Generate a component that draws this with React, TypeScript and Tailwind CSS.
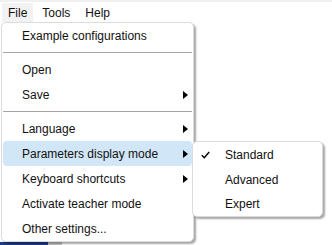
import React from 'react';

const font = "font-['Liberation_Sans','Arial',sans-serif]";

const Arrow = () => (
  <svg width="5" height="8" viewBox="0 0 5 8" className="shrink-0">
    <path d="M0 0 L5 4 L0 8 Z" fill="#000" />
  </svg>
);

const Check = () => (
  <svg width="9" height="8" viewBox="0 0 9 8">
    <path d="M0.8 4.2 L3.3 6.8 L8.2 1" stroke="#000" strokeWidth="1.4" fill="none" />
  </svg>
);

interface ItemProps {
  label: string;
  sub?: boolean;
  active?: boolean;
}

const Item: React.FC<ItemProps> = ({ label, sub, active }) => (
  <div
    className={`flex h-[25px] items-center justify-between pl-[19px] pr-[4px] mr-[1px] ml-[1px] rounded-[4px] ${
      active ? 'bg-[#d1e6f6]' : ''
    }`}
  >
    <span className="leading-none">{label}</span>
    {sub && <Arrow />}
  </div>
);

const Sep = () => (
  <div className="flex h-[9px] items-center px-[1px]">
    <div className="h-px w-full bg-[#a5a5a5]" />
  </div>
);

export default function App() {
  return (
    <div className={`relative flex h-[245px] w-[332px] flex-col overflow-hidden bg-white text-[12px] text-[#111] ${font}`}>
      <div className="h-[2px] bg-[#f0f0f0]" />
      <nav className="flex h-[20px] items-stretch gap-[3px] pl-[2px] pt-[1px]">
        <div className="flex items-center bg-[#f2f2f2] px-[6px]">File</div>
        <div className="flex items-center px-[6px]">Tools</div>
        <div className="flex items-center px-[6px]">Help</div>
      </nav>
      <main className="flex-1" />
      <div className="flex h-[3px]">
        <div className="w-[48px] bg-[#1c3d86]" />
        <div className="w-[14px] bg-[#c9c9c9]" />
      </div>

      {/* File menu */}
      <div className="absolute left-[1px] top-[22px] w-[193px] rounded-[5px] border border-[#dcdcdc] bg-white shadow-[2px_2px_2px_rgba(0,0,0,0.35)]">
        <Item label="Example configurations" />
        <Sep />
        <Item label="Open" />
        <Item label="Save" sub />
        <Sep />
        <Item label="Language" sub />
        <Item label="Parameters display mode" sub active />
        <Item label="Keyboard shortcuts" sub />
        <Item label="Activate teacher mode" />
        <Item label="Other settings..." />
      </div>

      {/* Parameters display mode submenu */}
      <div className="absolute left-[192px] top-[141px] w-[131px] rounded-[5px] border border-[#dcdcdc] bg-white shadow-[2px_2px_2px_rgba(0,0,0,0.35)]">
        <div className="flex h-[25px] items-center">
          <div className="flex w-[32px] justify-center pr-[8px]">
            <Check />
          </div>
          <span className="leading-none">Standard</span>
        </div>
        <div className="flex h-[25px] items-center pl-[32px]">
          <span className="leading-none">Advanced</span>
        </div>
        <div className="flex h-[24px] items-center pl-[32px]">
          <span className="leading-none">Expert</span>
        </div>
      </div>
    </div>
  );
}
